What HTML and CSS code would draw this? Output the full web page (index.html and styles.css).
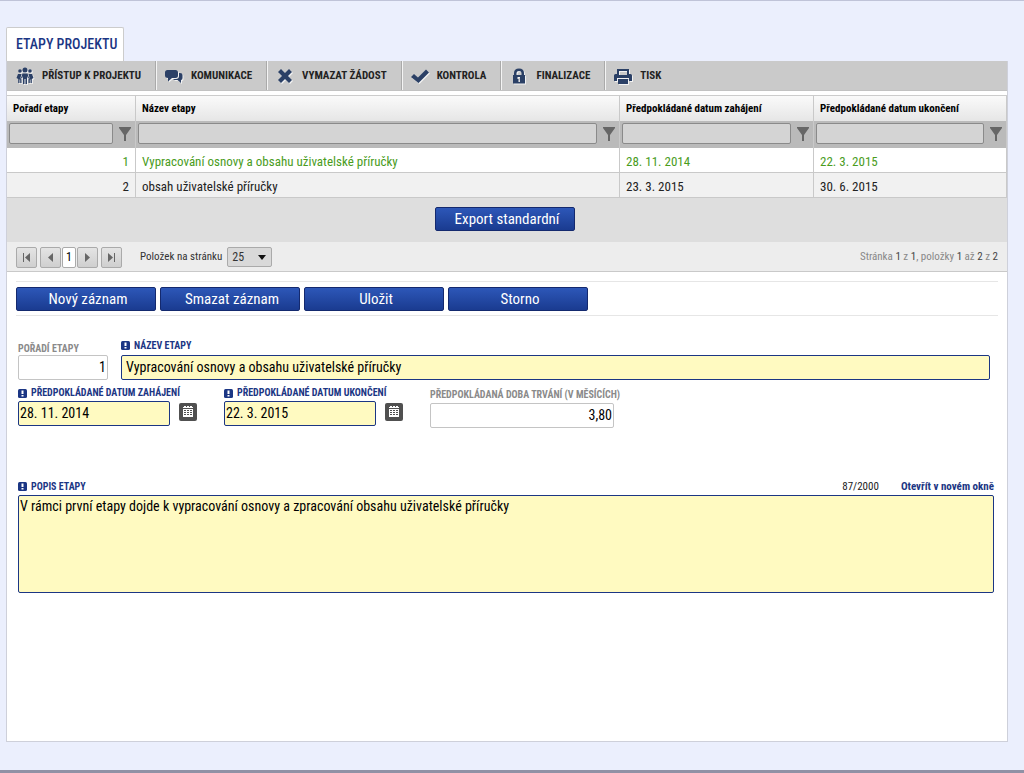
FILE: index.html
```html
<!DOCTYPE html>
<html lang="cs">
<head>
<meta charset="utf-8">
<meta name="viewport" content="width=device-width, initial-scale=1">
<title>Etapy projektu</title>
<link rel="stylesheet" href="styles.css">
</head>
<body>
<svg class="sprite" aria-hidden="true">
  <symbol id="filter" viewBox="0 0 12 14"><path d="M0 0h12v1L7 8v6H5V8L0 1z"/></symbol>
  <symbol id="required" viewBox="0 0 9 9"><rect width="9" height="9" rx="1.5" fill="#1b3684"/><path d="M3.5 1.5h2v3.500h-2zM3.500 6h2v1.500h-2z" fill="#fff"/></symbol>
  <symbol id="calendar" viewBox="0 0 18 18"><rect width="18" height="18" rx="2" fill="#505050"/><path d="M4 4h1V3h2v1h1V3h2v1h1V3h2v1h1v10H4z" fill="#fff"/><path d="M4 5h10v1H4zM5 7h2v1H5zM8 7h2v1H8zM11 7h2v1h-2zM5 9h2v1H5zM8 9h2v1H8zM11 9h2v1h-2zM5 11h2v1H5zM8 11h2v1H8zM11 11h2v1h-2z" fill="#505050"/></symbol>
</svg>
<main class="page">
  <h1 class="tab">ETAPY PROJEKTU</h1>
  <section class="panel">
    <nav class="toolbar">
      <button type="button" class="tool"><svg class="tool-icon" viewBox="0 0 18 18"><circle cx="9" cy="3" r="2.5"/><circle cx="4" cy="4" r="1.8"/><circle cx="14" cy="4" r="1.8"/><path d="M6.500 6.500h5L13 11l-1 .5-1-2.500V17H9.500v-5h-1v5H7V9l-1 2.500-1-.5zM2 7h3.500L4.500 11l1 1.500V16H4.200v-3.500h-.7V16H2.200v-4L.5 11zM16 7h-3.500l1 4-1 1.500V16h1.300v-3.500h.7V16h1.300v-4l1.700-1z"/></svg>PŘÍSTUP K PROJEKTU</button>
      <button type="button" class="tool"><svg class="tool-icon" viewBox="0 0 18 18"><path d="M2.500 3h8Q13 3 13 5.500v3Q13 11 10.500 11H7l-4 3.500V11Q0 11 0 8.500v-3Q0 3 2.500 3zM14 6h1q2.500 0 2.500 2v3q0 2-1.500 2v3l-3.500-3H9.500L8 12h3q3 0 3-3z"/></svg>KOMUNIKACE</button>
      <button type="button" class="tool"><svg class="tool-icon" viewBox="0 0 18 18"><path d="M5 2l4 4 4-4 3 3-4 4 4 4-3 3-4-4-4 4-3-3 4-4-4-4z"/></svg>VYMAZAT ŽÁDOST</button>
      <button type="button" class="tool"><svg class="tool-icon" viewBox="0 0 18 18"><path d="M0 10l3-3 4 3.500L15 2.500l3 3L7.500 16z"/></svg>KONTROLA</button>
      <button type="button" class="tool"><svg class="tool-icon" viewBox="0 0 18 18"><path fill-rule="evenodd" d="M3 8h1V6q0-4.500 5-4.500T14 6v2h1v8.500H3zM6.500 8h5V6q0-2-2.500-2T6.500 6zM7.500 10v2h1v3h1.500v-5z"/></svg>FINALIZACE</button>
      <button type="button" class="tool"><svg class="tool-icon" viewBox="0 0 18 18"><path fill-rule="evenodd" d="M3 2h12v5h1.500Q18 7 18 8.500V14h-3v-3H3v3H0V8.500Q0 7 1.500 7H3zM5 4v4h8V4zM4 12h10v5H4z"/></svg>TISK</button>
    </nav>

    <table class="grid">
      <colgroup><col class="col-order"><col><col class="col-start"><col class="col-end"></colgroup>
      <thead>
        <tr class="heads"><th scope="col">Pořadí etapy</th><th scope="col">Název etapy</th><th scope="col">Předpokládané datum zahájení</th><th scope="col">Předpokládané datum ukončení</th></tr>
        <tr class="filters">
          <td><div class="filter"><input type="text" aria-label="Filtr Pořadí etapy"><button type="button" aria-label="Filtrovat"><svg><use href="#filter"/></svg></button></div></td>
          <td><div class="filter"><input type="text" aria-label="Filtr Název etapy"><button type="button" aria-label="Filtrovat"><svg><use href="#filter"/></svg></button></div></td>
          <td><div class="filter"><input type="text" aria-label="Filtr datum zahájení"><button type="button" aria-label="Filtrovat"><svg><use href="#filter"/></svg></button></div></td>
          <td><div class="filter"><input type="text" aria-label="Filtr datum ukončení"><button type="button" aria-label="Filtrovat"><svg><use href="#filter"/></svg></button></div></td>
        </tr>
      </thead>
      <tbody>
        <tr class="selected"><td class="num">1</td><td>Vypracování osnovy a obsahu uživatelské příručky</td><td>28. 11. 2014</td><td>22. 3. 2015</td></tr>
        <tr class="alt"><td class="num">2</td><td>obsah uživatelské příručky</td><td>23. 3. 2015</td><td>30. 6. 2015</td></tr>
      </tbody>
    </table>
    <div class="export"><button type="button" class="btn">Export standardní</button></div>
    <div class="pager">
      <div class="pages">
        <button type="button" class="page-btn first" aria-label="První"><svg viewBox="0 0 9 9"><path d="M1 0h1v9H1zM8 0v9L3 4.500z"/></svg></button>
        <button type="button" class="page-btn" aria-label="Předchozí"><svg viewBox="0 0 9 9"><path d="M7 0v9L2 4.500z"/></svg></button>
        <button type="button" class="page-btn current">1</button>
        <button type="button" class="page-btn" aria-label="Další"><svg viewBox="0 0 9 9"><path d="M2 0v9l5-4.500z"/></svg></button>
        <button type="button" class="page-btn last" aria-label="Poslední"><svg viewBox="0 0 9 9"><path d="M7 0h1v9H7zM1 0v9l5-4.500z"/></svg></button>
      </div>
      <label for="size">Položek na stránku</label>
      <div class="select">
        <select id="size"><option>25</option><option>50</option></select>
        <svg viewBox="0 0 8 5" aria-hidden="true"><path d="M0 0h8L4 5z"/></svg>
      </div>
      <p class="summary">Stránka <b>1</b> z <b>1</b>, položky <b>1</b> až <b>2</b> z <b>2</b></p>
    </div>

    <div class="actions">
      <button type="button" class="btn">Nový záznam</button>
      <button type="button" class="btn">Smazat záznam</button>
      <button type="button" class="btn">Uložit</button>
      <button type="button" class="btn">Storno</button>
    </div>

    <form class="form">
      <div class="row row-name">
        <div class="field order"><label class="muted" for="order">POŘADÍ ETAPY</label><input id="order" class="right" type="text" value="1" readonly></div>
        <div class="field grow"><label class="raised" for="name"><svg><use href="#required"/></svg>NÁZEV ETAPY</label><input id="name" class="req roomy" type="text" value="Vypracování osnovy a obsahu uživatelské příručky"></div>
      </div>
      <div class="row row-dates">
        <div class="field date"><label for="start"><svg><use href="#required"/></svg>PŘEDPOKLÁDANÉ DATUM ZAHÁJENÍ</label><div class="pick"><input id="start" class="req" type="text" value="28. 11. 2014"><button type="button" aria-label="Kalendář"><svg><use href="#calendar"/></svg></button></div></div>
        <div class="field date"><label for="end"><svg><use href="#required"/></svg>PŘEDPOKLÁDANÉ DATUM UKONČENÍ</label><div class="pick"><input id="end" class="req" type="text" value="22. 3. 2015"><button type="button" aria-label="Kalendář"><svg><use href="#calendar"/></svg></button></div></div>
        <div class="field length"><label class="muted" for="months">PŘEDPOKLÁDANÁ DOBA TRVÁNÍ (V MĚSÍCÍCH)</label><input id="months" class="right" type="text" value="3,80" readonly></div>
      </div>
      <div class="field desc">
        <div class="desc-head"><label for="desc"><svg><use href="#required"/></svg>POPIS ETAPY</label><span class="count">87/2000</span><a href="#desc">Otevřít v novém okně</a></div>
        <textarea id="desc" class="req">V rámci první etapy dojde k vypracování osnovy a zpracování obsahu uživatelské příručky</textarea>
      </div>
    </form>
  </section>
</main>
</body>
</html>
```
FILE: styles.css
```css
* { box-sizing: border-box; }
body {
  margin: 0;
  background: #ebeffd;
  color: #222;
  font-family: "Roboto Condensed", "Liberation Sans Narrow", Roboto, sans-serif;
  font-size: 13px;
  line-height: 16px;
}
button, input, select, textarea { font: inherit; color: inherit; margin: 0; }
button { cursor: pointer; padding: 0; border: 0; background: none; }
.sprite { display: none; }

.page {
  min-height: 100vh;
  display: flex;
  flex-direction: column;
  align-items: flex-start;
  padding: 26px 16px 28px 6px;
  border-top: 1px solid #bfc3d8;
  border-bottom: 3px solid #9091a5;
}
.tab {
  margin: 0;
  padding: 8px 6px 9px 9px;
  background: #fff;
  border: 1px solid #ccc;
  border-bottom: 0;
  border-radius: 2px 2px 0 0;
  color: #1b3684;
  font-size: 14px;
  font-weight: 500;
}
.panel {
  flex: 1;
  align-self: stretch;
  background: #fff;
  border: 1px solid #ced0da;
  border-top: 0;
}

.toolbar { display: flex; height: 30px; background: #cacaca; border-bottom: 1px solid #c2c2c2; }
.tool {
  display: flex;
  align-items: center;
  gap: 8px;
  padding: 0 14px 0 8px;
  border-right: 1px solid #aaa;
  border-left: 1px solid #f4f4f4;
  color: #222;
  font-size: 11px;
  font-weight: 700;
}
.tool:first-child { padding-left: 9px; border-left: 0; }
.tool:last-child { border-right: 0; }
.tool-icon { width: 18px; height: 18px; fill: #2b4066; filter: drop-shadow(1px 1px 0 #f2f2f2); }

.grid { width: 100%; margin-top: 4px; border-collapse: separate; border-spacing: 0; table-layout: fixed; }
.col-order { width: 129px; }
.col-start { width: 194px; }
.col-end { width: 193px; }
.grid th, .grid td { padding: 0 6px; border-right: 1px solid #c9c9c9; text-align: left; }
.heads th {
  height: 26px;
  border-top: 1px solid #ccc;
  background: linear-gradient(#fafafa, #e6e6e6);
  color: #000;
  font-size: 11px;
  font-weight: 700;
}
.grid .filters td { height: 27px; padding: 0 4px 2px 2px; background: #bababa; }
.filter { display: flex; align-items: center; gap: 6px; }
.filter input { flex: 1; min-width: 0; height: 21px; border: 1px solid #8a8a8a; border-radius: 2px; background: #d4d4d4; }
.filter button { width: 12px; height: 14px; }
.filter svg { display: block; width: 12px; height: 14px; fill: #666; }
.grid tbody td { height: 25px; padding-top: 3px; border-bottom: 1px solid #c9c9c9; }
.grid .selected { color: #4a9c1d; }
.grid .alt { background: #f1f1f1; }
.grid .num { text-align: right; }

.btn {
  width: 140px;
  height: 24px;
  padding-left: 4px;
  border: 1px solid #14296e;
  border-radius: 2px;
  background: linear-gradient(#2d57b8, #1a3b90);
  color: #fff;
  font-size: 15px;
}
.export { display: flex; justify-content: center; padding: 9px 10px 11px 6px; background: #dedede; }
.pager { display: flex; align-items: center; height: 30px; padding: 1px 9px 0; background: #ededed; border-bottom: 1px solid #c9c9c9; font-size: 11px; color: #333; }
.pages { display: flex; gap: 1px; margin-right: 18px; }
.page-btn {
  display: grid;
  place-items: center;
  width: 21px;
  height: 21px;
  border: 1px solid #aaa;
  border-radius: 2px;
  background: linear-gradient(#e4e4e4, #cfcfcf);
}
.page-btn svg { width: 9px; height: 9px; fill: #666; }
.first { margin-right: 2px; }
.last { margin-left: 2px; }
.page-btn.current { width: 14px; background: #fff; color: #000; font-size: 12px; }
.select { display: grid; align-items: center; margin-left: 5px; }
.select select, .select svg { grid-area: 1 / 1; }
.select select {
  appearance: none;
  width: 45px;
  height: 20px;
  padding: 0 4px;
  border: 1px solid #aaa;
  border-radius: 2px;
  background: #d9d9d9;
  font-size: 12px;
}
.select svg { justify-self: end; width: 8px; height: 5px; margin-right: 6px; fill: #111; pointer-events: none; }
.summary { margin: 0 0 0 auto; color: #888; }
.summary b { color: #444; font-weight: 400; }

.actions { display: flex; flex-wrap: wrap; gap: 4px; margin: 9px 9px 0; padding: 5px 0 4px; border: solid #e6e6e6; border-width: 1px 0; }

.form { display: flex; flex-direction: column; padding: 24px 13px 20px 11px; }
.row { display: flex; }
.row-name { gap: 13px; margin-right: 4px; }
.row-dates { gap: 27px; margin-top: 5px; align-items: flex-start; }
.field { display: flex; flex-direction: column; }
.grow { flex: 1; }
.order { width: 90px; }
.date { width: 179px; }
.length { width: 200px; margin-top: 2px; }
.form label { display: flex; align-items: center; gap: 4px; height: 16px; color: #1b3684; font-size: 10px; font-weight: 700; white-space: nowrap; }
.form .row-name label { height: 15px; }
.form .row-name .muted { align-items: flex-end; line-height: 12px; }
.form .row-name .raised { height: 11px; margin-bottom: 4px; }
.form label.muted { color: #8a8a8a; }
.form label svg { width: 9px; height: 9px; }
.form input, .form textarea { border: 1px solid #c4c4c4; border-radius: 2px; background: #fff; color: #000; font-size: 14px; line-height: 18px; }
.form input { width: 100%; height: 25px; padding: 0 1px 2px; }
.form .roomy { padding-left: 4px; }
.form .req { border-color: #1b3684; background: #fffac1; }
.form .right { text-align: right; }
.length input { max-width: 184px; }
.pick { display: flex; align-items: flex-start; gap: 9px; }
.pick button { padding-top: 2px; }
.pick button svg { display: block; width: 18px; height: 18px; }
.pick input { flex: 1; min-width: 0; }
.desc { margin-top: 50px; }
.desc-head { display: flex; align-items: center; gap: 22px; height: 17px; color: #222; font-size: 11px; }
.desc-head label { margin-right: auto; }
.desc-head a { color: #1b3684; font-weight: 700; text-decoration: none; }
.form textarea { height: 98px; padding: 1px; resize: none; }
```
